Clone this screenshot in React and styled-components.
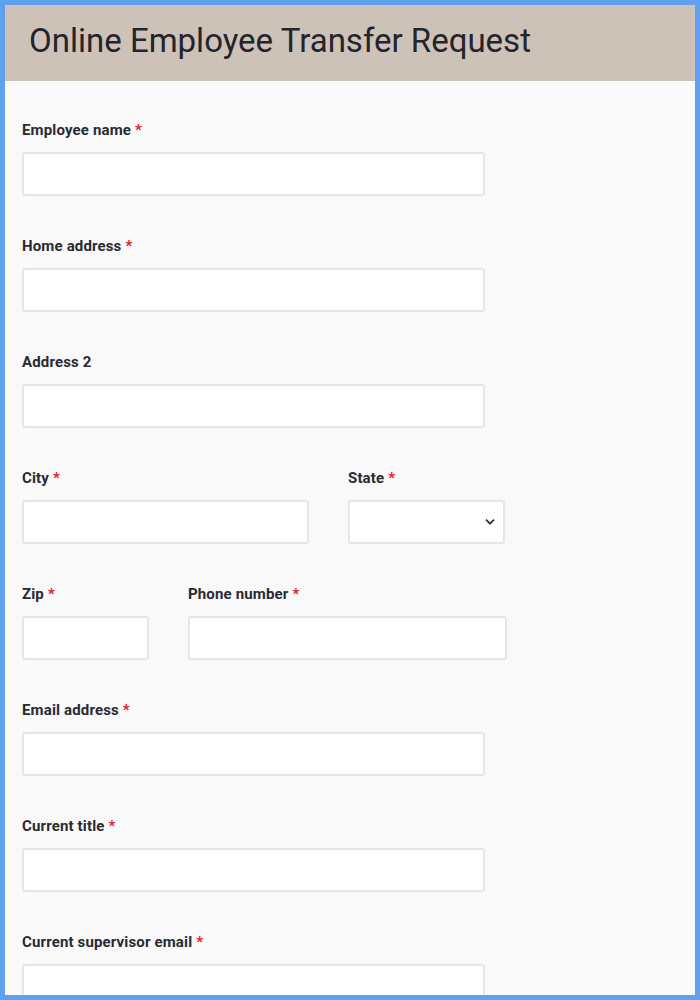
import React from 'react';
import styled, { createGlobalStyle } from 'styled-components';

const GlobalStyle = createGlobalStyle`
  html, body {
    margin: 0;
    padding: 0;
    background: #f9f9f9;
  }
  * { box-sizing: border-box; }
`;

const Frame = styled.div`
  width: 700px;
  height: 1000px;
  border: 5px solid #5fa1ef;
  background: #f9f9f9;
  overflow: hidden;
  font-family: Roboto, "Liberation Sans", sans-serif;
`;

const Header = styled.header`
  height: 76px;
  background: #cdc2b8;
  display: flex;
  align-items: center;
  padding: 0 0 5px 24px;
`;

const Title = styled.h1`
  margin: 0;
  font-size: 33px;
  font-weight: 400;
  color: #24242c;
`;

const Form = styled.form`
  padding: 39px 17px 0;
  display: flex;
  flex-direction: column;
  gap: 40px;
`;

const Row = styled.div`
  display: flex;
  gap: 39px;
`;

const Field = styled.div`
  display: flex;
  flex-direction: column;
  gap: 12px;
  width: ${p => p.$width || 463}px;
`;

const Label = styled.label`
  font-size: 15px;
  font-weight: 700;
  line-height: 20px;
  letter-spacing: 0.15px;
  color: #2a2a33;
`;

const Star = styled.span`
  color: #e0202a;
  margin-left: 4px;
`;

const Input = styled.input`
  height: 44px;
  width: 100%;
  border: 2px solid #e9e6e0;
  border-radius: 3px;
  background: #fff;
  font: inherit;
  outline: none;
`;

const SelectBox = styled.div`
  position: relative;
  height: 44px;
  border: 2px solid #e9e6e0;
  border-radius: 3px;
  background: #fff;

  svg {
    position: absolute;
    right: 8px;
    top: 50%;
    transform: translateY(-50%);
  }
`;

const Chevron = () => (
  <svg width="10" height="7" viewBox="0 0 10 7" fill="none">
    <path d="M1 1.2 L5 5.2 L9 1.2" stroke="#333" strokeWidth="1.8" />
  </svg>
);

const TextField = ({ label, required, width }) => (
  <Field $width={width}>
    <Label>
      {label}
      {required && <Star>*</Star>}
    </Label>
    <Input type="text" />
  </Field>
);

const App = () => (
  <>
    <GlobalStyle />
    <Frame>
      <Header>
        <Title>Online Employee Transfer Request</Title>
      </Header>
      <Form>
        <TextField label="Employee name" required />
        <TextField label="Home address" required />
        <TextField label="Address 2" />
        <Row>
          <TextField label="City" required width={287} />
          <Field $width={157}>
            <Label>State<Star>*</Star></Label>
            <SelectBox><Chevron /></SelectBox>
          </Field>
        </Row>
        <Row>
          <TextField label="Zip" required width={127} />
          <TextField label="Phone number" required width={319} />
        </Row>
        <TextField label="Email address" required />
        <TextField label="Current title" required />
        <TextField label="Current supervisor email" required />
      </Form>
    </Frame>
  </>
);

export default App;
